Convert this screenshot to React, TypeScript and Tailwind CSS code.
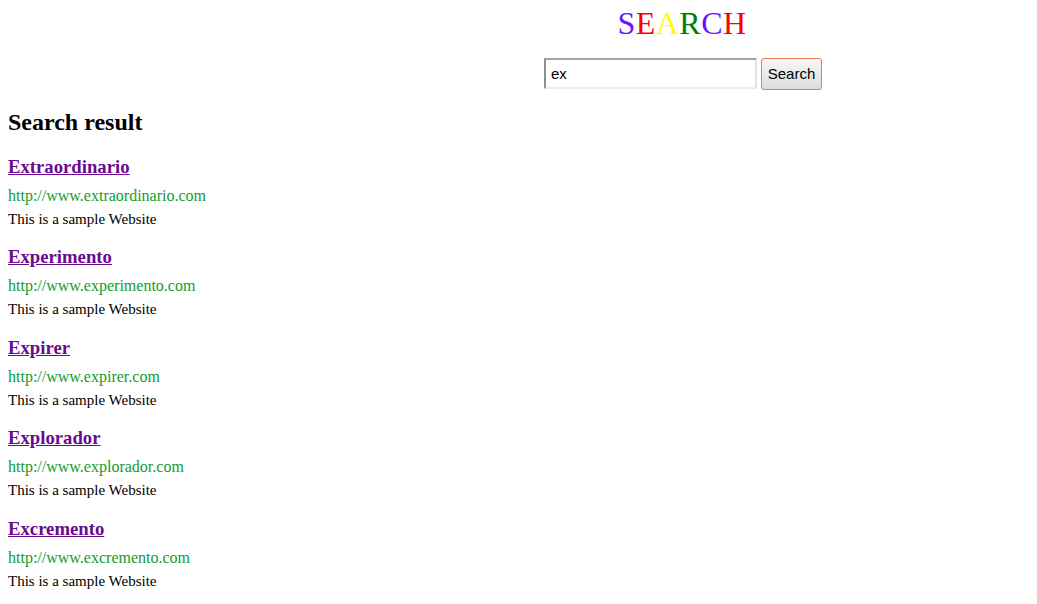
import { useState } from 'react';

type Result = {
  title: string;
  url: string;
  description: string;
};

const results: Result[] = [
  { title: 'Extraordinario', url: 'http://www.extraordinario.com', description: 'This is a sample Website' },
  { title: 'Experimento', url: 'http://www.experimento.com', description: 'This is a sample Website' },
  { title: 'Expirer', url: 'http://www.expirer.com', description: 'This is a sample Website' },
  { title: 'Explorador', url: 'http://www.explorador.com', description: 'This is a sample Website' },
  { title: 'Excremento', url: 'http://www.excremento.com', description: 'This is a sample Website' },
];

const letters = [
  { ch: 'S', color: 'text-[#6a14ff]' },
  { ch: 'E', color: 'text-[#ff0000]' },
  { ch: 'A', color: 'text-[#ffff00]' },
  { ch: 'R', color: 'text-[#008000]' },
  { ch: 'C', color: 'text-[#6a14ff]' },
  { ch: 'H', color: 'text-[#ff0000]' },
];

export default function App() {
  const [query, setQuery] = useState('ex');

  return (
    <div className="min-h-screen bg-white text-black font-['Liberation_Serif',serif]">
      <header className="flex flex-col items-center pl-[329px]">
        <h1 className="mt-[5px] mr-[2px] text-[32px] leading-[37px] font-normal tracking-[0.5px]">
          {letters.map((l) => (
            <span key={l.ch + l.color} className={l.color}>
              {l.ch}
            </span>
          ))}
        </h1>
        <form
          className="mt-4 flex items-start gap-1"
          onSubmit={(e) => e.preventDefault()}
        >
          <input
            value={query}
            onChange={(e) => setQuery(e.target.value)}
            className="w-[213px] h-[31px] px-[5px] border-2 border-solid border-t-[#a3a3a3] border-l-[#8f8f8f] border-b-[#ececec] border-r-[#e2e2e2] text-[15px] font-['Liberation_Sans',sans-serif] outline-none"
          />
          <button
            type="submit"
            className="box-border w-[61px] h-[32px] rounded-[3px] border border-solid border-[#e57b5c] bg-linear-to-b from-[#f7f7f7] to-[#dddddd] text-[15px] font-['Liberation_Sans',sans-serif] text-black"
          >
            Search
          </button>
        </form>
      </header>

      <main className="px-2">
        <h2 className="mt-[18px] text-[24px] leading-[28px] font-bold">Search result</h2>
        <div className="mt-[20px] flex flex-col gap-[18.4px]">
          {results.map((r) => (
            <div key={r.title}>
              <a
                href="#"
                className="block w-fit text-[18.72px] leading-[22px] font-bold text-[#6a0a8f] underline"
              >
                {r.title}
              </a>
              <div className="mt-[9px] text-[16px] leading-[18px] text-[#119c2e]">{r.url}</div>
              <p className="mt-[6px] text-[15px] leading-[17px]">{r.description}</p>
            </div>
          ))}
        </div>
      </main>
    </div>
  );
}
